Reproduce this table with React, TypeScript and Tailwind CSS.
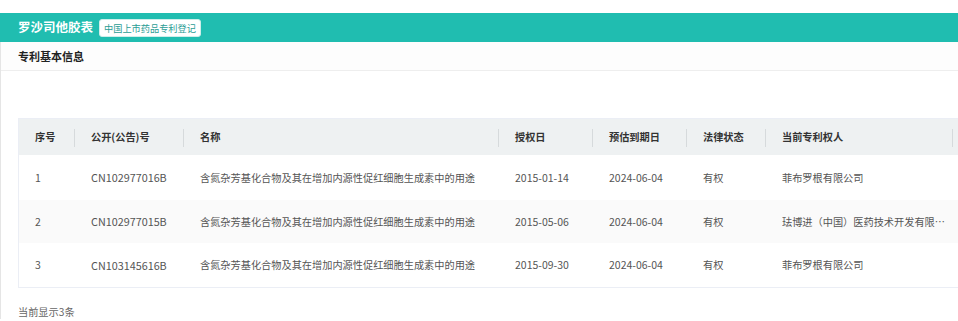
import React from 'react';

interface Patent {
  no: number;
  pubNo: string;
  name: string;
  grantDate: string;
  expireDate: string;
  status: string;
  owner: string;
}

const PATENTS: Patent[] = [
  {
    no: 1,
    pubNo: 'CN102977016B',
    name: '含氮杂芳基化合物及其在增加内源性促红细胞生成素中的用途',
    grantDate: '2015-01-14',
    expireDate: '2024-06-04',
    status: '有权',
    owner: '菲布罗根有限公司',
  },
  {
    no: 2,
    pubNo: 'CN102977015B',
    name: '含氮杂芳基化合物及其在增加内源性促红细胞生成素中的用途',
    grantDate: '2015-05-06',
    expireDate: '2024-06-04',
    status: '有权',
    owner: '珐博进（中国）医药技术开发有限公司',
  },
  {
    no: 3,
    pubNo: 'CN103145616B',
    name: '含氮杂芳基化合物及其在增加内源性促红细胞生成素中的用途',
    grantDate: '2015-09-30',
    expireDate: '2024-06-04',
    status: '有权',
    owner: '菲布罗根有限公司',
  },
];

const COLS = [
  { label: '序号', w: 'w-[56px]' },
  { label: '公开(公告)号', w: 'w-[109px]' },
  { label: '名称', w: 'w-[315px]' },
  { label: '授权日', w: 'w-[94px]' },
  { label: '预估到期日', w: 'w-[94px]' },
  { label: '法律状态', w: 'w-[79px]' },
  { label: '当前专利权人', w: 'w-[187px]' },
];

export default function App() {
  return (
    <div className="w-[958px] h-[321px] overflow-hidden bg-white font-['Noto_Sans_CJK_SC',sans-serif] text-[10.2px]">
      <div className="h-[13px]" />
      {/* title bar */}
      <div className="flex items-center h-[30px] bg-[#20bdb0] border-b border-[#6fd6cd] px-[18px] gap-[6px]">
        <span className="text-white font-bold text-[12.5px] leading-none">罗沙司他胶表</span>
        <span className="bg-white text-[#2a9d95] border border-[#cfeeea] rounded-[3px] px-[4px] h-[18px] leading-[16px] text-[9.2px]">
          中国上市药品专利登记
        </span>
      </div>

      <div className="border-l border-[#e5e5e5]">
        <div className="h-[29px] bg-[#fdfdfd] border-b border-[#eeeeee] flex items-center px-[17px] -mt-[1px]">
          <span className="font-bold text-[#222] text-[11px]">专利基本信息</span>
        </div>

        <div className="pt-[47px] pl-[17px]">
          <div className="w-[1000px] border border-[#ebeef5]">
            {/* header */}
            <div className="flex h-[36px] bg-[#eef1f2] text-[#333] font-bold">
              {COLS.map((c) => (
                <div key={c.label} className={`${c.w} shrink-0 flex items-center relative pl-[16px]`}>
                  {c.label}
                  <span className="absolute right-0 top-[10px] h-[18px] w-px bg-[#d6dadc]" />
                </div>
              ))}
            </div>
            {PATENTS.map((p, i) => (
              <div
                key={p.no}
                className={`flex text-[#555] ${i === 1 ? 'h-[43px] bg-[#fafafa]' : 'h-[44px] bg-white'} ${i === 0 ? 'h-[45px]' : ''}`}
              >
                <div className="w-[56px] shrink-0 flex items-center pl-[16px] text-[10.5px]">{p.no}</div>
                <div className="w-[109px] shrink-0 flex items-center pl-[16px] text-[10.8px]">{p.pubNo}</div>
                <div className="w-[315px] shrink-0 flex items-center pl-[16px]">{p.name}</div>
                <div className="w-[94px] shrink-0 flex items-center pl-[16px] text-[10.5px]">{p.grantDate}</div>
                <div className="w-[94px] shrink-0 flex items-center pl-[16px] text-[10.5px]">{p.expireDate}</div>
                <div className="w-[79px] shrink-0 flex items-center pl-[16px]">{p.status}</div>
                <div className="w-[187px] shrink-0 flex items-center pl-[16px] pr-[8px] min-w-0">
                  <span className="truncate">{p.owner}</span>
                </div>
              </div>
            ))}
          </div>
          <div className="mt-[16px] text-[#666]">当前显示3条</div>
        </div>
      </div>
    </div>
  );
}
